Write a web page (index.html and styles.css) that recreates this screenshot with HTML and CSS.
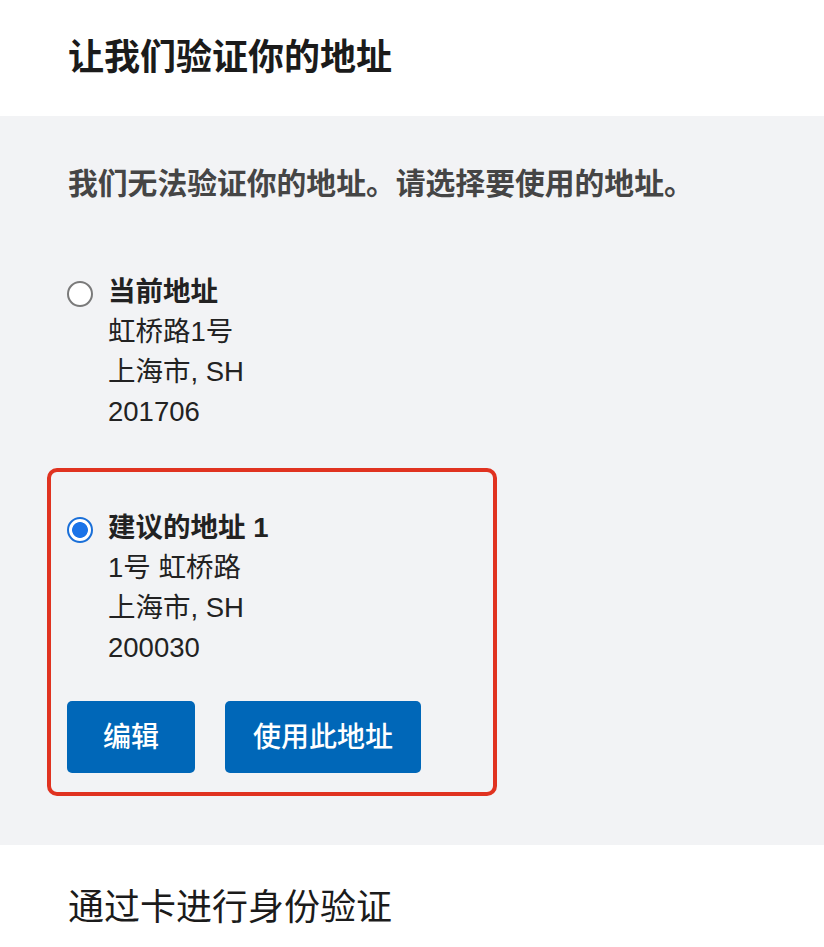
FILE: index.html
```html
<!DOCTYPE html>
<html lang="zh-CN">
<head>
<meta charset="utf-8">
<link rel="stylesheet" href="styles.css">
</head>
<body>
<header class="top">
  <h1 class="title">让我们验证你的地址</h1>
</header>
<section class="panel">
  <p class="lead">我们无法验证你的地址。请选择要使用的地址。</p>
  <div class="option">
    <span class="radio"></span>
    <div class="addr">
      <div class="addr-name">当前地址</div>
      <div>虹桥路1号</div>
      <div>上海市, SH</div>
      <div>201706</div>
    </div>
  </div>
  <div class="selected">
    <div class="option">
      <span class="radio checked"></span>
      <div class="addr">
        <div class="addr-name">建议的地址 1</div>
        <div>1号 虹桥路</div>
        <div>上海市, SH</div>
        <div>200030</div>
      </div>
    </div>
    <div class="actions">
      <button class="btn btn-edit">编辑</button>
      <button class="btn">使用此地址</button>
    </div>
  </div>
</section>
<section class="next">
  <h2 class="next-title">通过卡进行身份验证</h2>
</section>
</body>
</html>
```
FILE: styles.css
```css
* { box-sizing: border-box; }
html, body {
  margin: 0;
  padding: 0;
  background: #ffffff;
  font-family: "Liberation Sans", "Noto Sans CJK SC", sans-serif;
  color: #222222;
}
.top {
  height: 116px;
  padding: 0 68px;
  display: flex;
  align-items: center;
}
.title {
  margin: 0;
  font-size: 36px;
  line-height: 44px;
  font-weight: 700;
  color: #1b1b1b;
}
.panel {
  background: #f2f3f5;
  padding: 48px 47px 49px;
}
.lead {
  margin: 0 0 68px 21px;
  font-size: 29.8px;
  line-height: 40px;
  font-weight: 700;
  color: #454545;
}
.option {
  display: flex;
  gap: 15px;
  align-items: flex-start;
}
.panel > .option {
  padding-left: 20px;
}
.radio {
  width: 26px;
  height: 26px;
  margin-top: 9px;
  border-radius: 50%;
  border: 2px solid #7a7a7a;
  background: #ffffff;
  flex: none;
}
.radio.checked {
  border: 2px solid #1a6fd8;
  background: radial-gradient(circle, #1a73e8 0 7.5px, #ffffff 8.3px);
}
.addr {
  font-size: 27.5px;
  line-height: 40px;
  color: #222222;
}
.addr-name {
  font-weight: 700;
}
.selected {
  margin-top: 36px;
  width: 450px;
  border: 4px solid #e03220;
  border-radius: 10px;
  padding: 36px 16px 19px;
}
.actions {
  display: flex;
  gap: 30px;
  margin-top: 33px;
}
.btn {
  height: 72px;
  min-width: 128px;
  padding: 0 28px 4px;
  border: none;
  border-radius: 5px;
  background: #0067b8;
  color: #ffffff;
  font-family: "Liberation Sans", "Noto Sans CJK SC", sans-serif;
  font-size: 28px;
  font-weight: 500;
}
.next {
  padding: 41px 68px 0;
}
.next-title {
  margin: 0;
  font-size: 36px;
  line-height: 44px;
  font-weight: 400;
  color: #1b1b1b;
}
```
